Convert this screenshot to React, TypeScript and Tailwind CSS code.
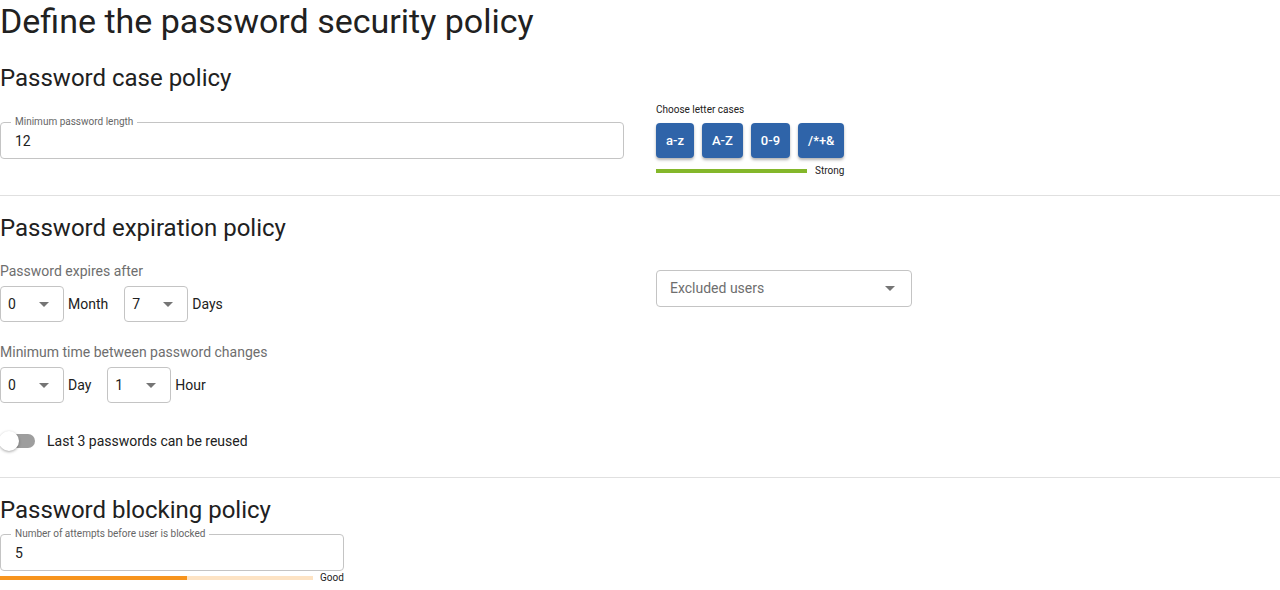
import React from "react";

function Outlined({ label, value, width }: { label: string; value: string; width: string }) {
  return (
    <div className={`relative h-[37px] rounded border border-[#c4c4c4] ${width}`}>
      <span className="absolute left-[10px] top-[-7px] bg-white px-1 text-[10px] leading-[12px] text-[#666666]">
        {label}
      </span>
      <div className="flex h-full items-center pl-[14px] pt-[1px] text-[14px] text-[#212121]">{value}</div>
    </div>
  );
}

function Arrow() {
  return (
    <svg width="10" height="5" viewBox="0 0 10 5" className="block">
      <path d="M0 0 L10 0 L5 5 Z" fill="#757575" />
    </svg>
  );
}

function Select({ value }: { value: string }) {
  return (
    <div className="flex h-[36px] w-[64px] items-center justify-between rounded border border-[#c4c4c4] pl-[7px] pr-[14px] text-[14px] text-[#212121]">
      <span>{value}</span>
      <Arrow />
    </div>
  );
}

function Divider() {
  return <div className="h-px w-full bg-[#e0e0e0]" />;
}

export default function App() {
  return (
    <div className="min-h-[590px] bg-white text-[#212121]" style={{ fontFamily: "Roboto, 'Liberation Sans', sans-serif" }}>
      <h1 className="text-[34px] font-normal leading-[42px]">Define the password security policy</h1>

      <h2 className="mt-[20px] text-[24px] leading-[32px]">Password case policy</h2>
      <div className="mt-[10px] grid grid-cols-2 gap-8">
        <div className="pt-[18px]">
          <Outlined label="Minimum password length" value="12" width="w-full" />
        </div>
        <div>
          <div className="text-[10px] leading-[12px] text-[#212121]">Choose letter cases</div>
          <div className="mt-[7px] flex gap-2">
            {["a-z", "A-Z", "0-9", "/*+&"].map((t) => (
              <div
                key={t}
                className="flex h-[35px] items-center rounded bg-[#2f64a9] px-[10px] text-[13px] font-medium text-white shadow-[0_2px_3px_rgba(0,0,0,0.3)]"
              >
                {t}
              </div>
            ))}
          </div>
          <div className="mt-[7px] flex items-center">
            <div className="h-[4px] w-[151px] bg-[#84b72a]" />
            <span className="ml-[8px] text-[10px] leading-[12px]">Strong</span>
          </div>
        </div>
      </div>

      <div className="mt-[18px]">
        <Divider />
      </div>

      <h2 className="mt-[16px] text-[24px] leading-[32px]">Password expiration policy</h2>
      <div className="mt-[17px] grid grid-cols-2 gap-8">
        <div>
          <div className="text-[14px] leading-[20px] text-[#6e6e6e]">Password expires after</div>
          <div className="mt-[5px] flex items-center text-[14px]">
            <Select value="0" />
            <span className="ml-1 mr-4">Month</span>
            <Select value="7" />
            <span className="ml-1">Days</span>
          </div>
          <div className="mt-[20px] text-[14px] leading-[20px] text-[#6e6e6e]">Minimum time between password changes</div>
          <div className="mt-[5px] flex items-center text-[14px]">
            <Select value="0" />
            <span className="ml-1 mr-4">Day</span>
            <Select value="1" />
            <span className="ml-1">Hour</span>
          </div>
          <div className="mt-[28px] flex h-[20px] items-center">
            <div className="relative h-[20px] w-[35px]">
              <div className="absolute left-[2px] top-[3px] h-[14px] w-[33px] rounded-full bg-[#9e9e9e]" />
              <div className="absolute left-[-1px] top-0 h-[20px] w-[20px] rounded-full bg-white shadow-[0_1px_3px_rgba(0,0,0,0.35)]" />
            </div>
            <span className="ml-[12px] text-[14px]">Last 3 passwords can be reused</span>
          </div>
        </div>
        <div className="pt-[9px]">
          <div className="flex h-[37px] w-[256px] items-center justify-between rounded border border-[#c4c4c4] pl-[13px] pr-[16px] text-[14px] text-[#6e6e6e]">
            <span>Excluded users</span>
            <Arrow />
          </div>
        </div>
      </div>

      <div className="mt-[26px]">
        <Divider />
      </div>

      <h2 className="mt-[16px] text-[24px] leading-[32px]">Password blocking policy</h2>
      <div className="mt-[8px]">
        <Outlined label="Number of attempts before user is blocked" value="5" width="w-[344px]" />
        <div className="mt-[1px] flex items-center">
          <div className="flex h-[4px] w-[313px]">
            <div className="h-full w-[187px] bg-[#f7941d]" />
            <div className="h-full flex-1 bg-[#fde3c4]" />
          </div>
          <span className="ml-[7px] text-[10px] leading-[12px]">Good</span>
        </div>
      </div>
    </div>
  );
}
